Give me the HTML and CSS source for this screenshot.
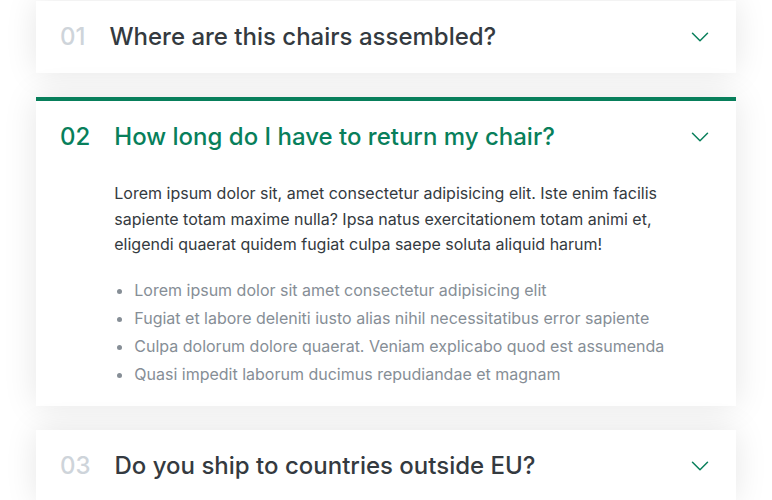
FILE: index.html
```html
<!DOCTYPE html>
<html lang="en">
<head>
<meta charset="utf-8">
<title>FAQ</title>
<link rel="stylesheet" href="styles.css">
</head>
<body>
<div class="accordion">
  <div class="item">
    <p class="number">01</p>
    <p class="title">Where are this chairs assembled?</p>
    <svg class="icon" viewBox="0 0 24 24" fill="none" stroke="currentColor" stroke-width="1.5"><path stroke-linecap="round" stroke-linejoin="round" d="M19.5 8.25l-7.5 7.5-7.5-7.5"/></svg>
  </div>
  <div class="item open">
    <p class="number">02</p>
    <p class="title">How long do I have to return my chair?</p>
    <svg class="icon" viewBox="0 0 24 24" fill="none" stroke="currentColor" stroke-width="1.5"><path stroke-linecap="round" stroke-linejoin="round" d="M19.5 8.25l-7.5 7.5-7.5-7.5"/></svg>
    <div class="content">
      <p>Lorem ipsum dolor sit, amet consectetur adipisicing elit. Iste enim facilis sapiente totam maxime nulla? Ipsa natus exercitationem totam animi et, eligendi quaerat quidem fugiat culpa saepe soluta aliquid harum!</p>
      <ul>
        <li>Lorem ipsum dolor sit amet consectetur adipisicing elit</li>
        <li>Fugiat et labore deleniti iusto alias nihil necessitatibus error sapiente</li>
        <li>Culpa dolorum dolore quaerat. Veniam explicabo quod est assumenda</li>
        <li>Quasi impedit laborum ducimus repudiandae et magnam</li>
      </ul>
    </div>
  </div>
  <div class="item">
    <p class="number">03</p>
    <p class="title">Do you ship to countries outside EU?</p>
    <svg class="icon" viewBox="0 0 24 24" fill="none" stroke="currentColor" stroke-width="1.5"><path stroke-linecap="round" stroke-linejoin="round" d="M19.5 8.25l-7.5 7.5-7.5-7.5"/></svg>
  </div>
</div>
</body>
</html>
```
FILE: styles.css
```css
* { margin: 0; padding: 0; box-sizing: border-box; }
html, body { background: #fff; }
body {
  font-family: Inter, "Noto Sans", sans-serif;
  color: #343a40;
}
.accordion {
  width: 700px;
  margin: 1px auto 0;
  display: flex;
  flex-direction: column;
  gap: 24px;
}
.item {
  background: #fff;
  box-shadow: 0 0 32px rgba(0, 0, 0, 0.1);
  padding: 24px;
  display: grid;
  grid-template-columns: auto 1fr auto;
  column-gap: 24px;
  row-gap: 32px;
  align-items: center;
}
.item.open { border-top: 4px solid #087f5b; }
.number, .title {
  font-size: 24px;
  line-height: 24px;
  font-weight: 500;
}
.number { color: #ced4da; }
.title { color: #343a40; }
.open .number, .open .title { color: #087f5b; }
.icon {
  width: 24px;
  height: 24px;
  color: #087f5b;
  display: block;
}
.content {
  grid-column: 2 / -1;
  font-size: 16px;
  line-height: 1.6;
  margin-bottom: -5px;
}
.content p { margin-bottom: 20px; }
.content ul {
  color: #868e96;
  padding-left: 20px;
  display: flex;
  flex-direction: column;
  gap: 2.4px;
}
```
